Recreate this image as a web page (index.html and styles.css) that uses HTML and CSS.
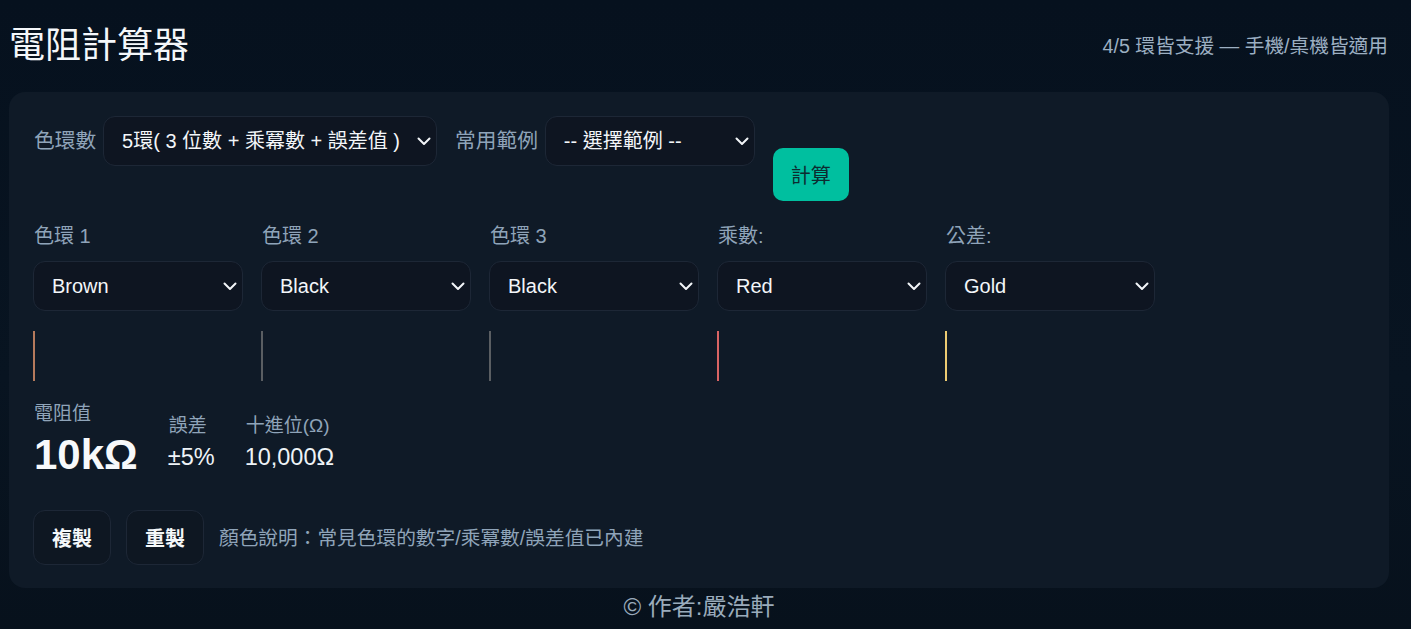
FILE: index.html
```html
<!DOCTYPE html>
<html lang="zh-Hant">
<head>
<meta charset="utf-8">
<title>電阻計算器</title>
<link rel="stylesheet" href="styles.css">
</head>
<body>
<div class="page">
  <header class="top">
    <h1 class="title">電阻計算器</h1>
    <div class="sub">4/5 環皆支援 — 手機/桌機皆適用</div>
  </header>

  <main class="card">
    <div class="row-top">
      <div class="field-inline">
        <label class="lbl">色環數</label>
        <div class="sel sel-count">
          <select><option>5環( 3 位數 + 乘冪數 + 誤差值 )</option><option>4環( 2 位數 + 乘冪數 + 誤差值 )</option></select>
          <svg class="chev" viewBox="0 0 14 9" width="14" height="9"><polyline points="1.5,1.5 7,7 12.5,1.5" fill="none" stroke="#f2f5f8" stroke-width="2" stroke-linecap="round" stroke-linejoin="round"/></svg>
        </div>
      </div>
      <div class="field-inline">
        <label class="lbl">常用範例</label>
        <div class="sel sel-example">
          <select><option>-- 選擇範例 --</option></select>
          <svg class="chev" viewBox="0 0 14 9" width="14" height="9"><polyline points="1.5,1.5 7,7 12.5,1.5" fill="none" stroke="#f2f5f8" stroke-width="2" stroke-linecap="round" stroke-linejoin="round"/></svg>
        </div>
      </div>
      <button class="calc">計算</button>
    </div>

    <div class="bands">
      <div class="band">
        <div class="band-label">色環 1</div>
        <div class="sel">
          <select><option>Brown</option></select>
          <svg class="chev" viewBox="0 0 14 9" width="14" height="9"><polyline points="1.5,1.5 7,7 12.5,1.5" fill="none" stroke="#f2f5f8" stroke-width="2" stroke-linecap="round" stroke-linejoin="round"/></svg>
        </div>
        <div class="swatch sw-brown"></div>
      </div>
      <div class="band">
        <div class="band-label">色環 2</div>
        <div class="sel">
          <select><option>Black</option></select>
          <svg class="chev" viewBox="0 0 14 9" width="14" height="9"><polyline points="1.5,1.5 7,7 12.5,1.5" fill="none" stroke="#f2f5f8" stroke-width="2" stroke-linecap="round" stroke-linejoin="round"/></svg>
        </div>
        <div class="swatch sw-black"></div>
      </div>
      <div class="band">
        <div class="band-label">色環 3</div>
        <div class="sel">
          <select><option>Black</option></select>
          <svg class="chev" viewBox="0 0 14 9" width="14" height="9"><polyline points="1.5,1.5 7,7 12.5,1.5" fill="none" stroke="#f2f5f8" stroke-width="2" stroke-linecap="round" stroke-linejoin="round"/></svg>
        </div>
        <div class="swatch sw-black"></div>
      </div>
      <div class="band">
        <div class="band-label">乘數:</div>
        <div class="sel">
          <select><option>Red</option></select>
          <svg class="chev" viewBox="0 0 14 9" width="14" height="9"><polyline points="1.5,1.5 7,7 12.5,1.5" fill="none" stroke="#f2f5f8" stroke-width="2" stroke-linecap="round" stroke-linejoin="round"/></svg>
        </div>
        <div class="swatch sw-red"></div>
      </div>
      <div class="band">
        <div class="band-label">公差:</div>
        <div class="sel">
          <select><option>Gold</option></select>
          <svg class="chev" viewBox="0 0 14 9" width="14" height="9"><polyline points="1.5,1.5 7,7 12.5,1.5" fill="none" stroke="#f2f5f8" stroke-width="2" stroke-linecap="round" stroke-linejoin="round"/></svg>
        </div>
        <div class="swatch sw-gold"></div>
      </div>
    </div>

    <div class="result">
      <div class="res-main">
        <div class="res-label">電阻值</div>
        <div class="res-big">10kΩ</div>
      </div>
      <div class="res-col">
        <div class="res-label">誤差</div>
        <div class="res-val">±5%</div>
      </div>
      <div class="res-col">
        <div class="res-label">十進位(Ω)</div>
        <div class="res-val">10,000Ω</div>
      </div>
    </div>

    <div class="actions">
      <button class="btn">複製</button>
      <button class="btn">重製</button>
      <span class="note">顏色說明：常見色環的數字/乘冪數/誤差值已內建</span>
    </div>
  </main>

  <footer class="foot">© 作者:嚴浩軒</footer>
</div>
</body>
</html>
```

FILE: styles.css
```css
* { box-sizing: border-box; }

html, body {
  margin: 0;
  padding: 0;
}

body {
  background: linear-gradient(180deg, #06111e 0%, #081421 60%, #07111c 100%);
  min-height: 629px;
  color: #e8eef5;
  font-family: "Liberation Sans", "Noto Sans CJK TC", sans-serif;
}

.page {
  width: 1380px;
  margin-left: 9px;
}

.top {
  height: 92px;
  display: flex;
  align-items: center;
  justify-content: space-between;
}

.title {
  margin: 0;
  font-size: 36px;
  font-weight: 400;
  line-height: 44px;
  color: #f4f7fa;
}

.sub {
  font-size: 19.7px;
  line-height: 24px;
  color: #9cafc2;
  padding-right: 1px;
}

.card {
  background: #0f1a27;
  border-radius: 16px;
  padding: 24px 24px 23px 24px;
}

.row-top {
  display: flex;
  align-items: flex-start;
  gap: 17px;
}

.field-inline {
  display: flex;
  align-items: center;
  gap: 7px;
  height: 50px;
}

.lbl {
  font-size: 20.7px;
  line-height: 26px;
  color: #8fa4b9;
  padding-left: 1px;
}

.sel {
  position: relative;
  width: 210px;
  height: 50px;
}

.sel-count { width: 334px; }
.sel-example { width: 210px; }

.sel select {
  appearance: none;
  -webkit-appearance: none;
  width: 100%;
  height: 100%;
  margin: 0;
  background: #0e1521;
  border: 1px solid #1d2736;
  border-radius: 12px;
  color: #f3f6f9;
  font-family: "Liberation Sans", "Noto Sans CJK TC", sans-serif;
  font-size: 20px;
  padding: 0 30px 0 18px;
  outline: none;
}

.chev {
  position: absolute;
  right: 6px;
  top: 21px;
  pointer-events: none;
}

.calc {
  margin-top: 32px;
  margin-left: 1px;
  width: 76px;
  height: 53px;
  border: none;
  border-radius: 10px;
  background: #00bf9f;
  color: #0d2b30;
  font-family: "Liberation Sans", "Noto Sans CJK TC", sans-serif;
  font-size: 20px;
  padding: 0;
}

.bands {
  display: flex;
  gap: 18px;
  margin-top: 22px;
}

.band {
  width: 210px;
  display: flex;
  flex-direction: column;
}

.band-label {
  font-size: 20px;
  line-height: 26px;
  color: #8fa4b9;
  padding-left: 1px;
  margin-bottom: 12px;
}

.swatch {
  width: 2px;
  height: 50px;
  margin-top: 20px;
}

.sw-brown { background: #b57a5c; }
.sw-black { background: #5a5e62; }
.sw-red { background: #d96464; }
.sw-gold { background: #eccb72; }

.result {
  display: flex;
  align-items: flex-start;
  gap: 30px;
  margin-top: 20px;
}

.res-label {
  font-size: 19px;
  line-height: 26px;
  color: #8fa4b9;
  padding-left: 1px;
}

.res-big {
  font-size: 42px;
  font-weight: 700;
  line-height: 48px;
  margin-top: 4px;
  color: #f7f9fb;
  padding-left: 1px;
}

.res-col {
  margin-top: 12px;
}

.res-val {
  font-size: 23.5px;
  line-height: 26px;
  margin-top: 5px;
  color: #eef3f7;
}

.actions {
  display: flex;
  align-items: center;
  gap: 15px;
  margin-top: 31px;
}

.btn {
  width: 78px;
  height: 55px;
  border: 1px solid #1d2736;
  border-radius: 12px;
  background: #0e1722;
  color: #f5f8fa;
  font-family: "Liberation Sans", "Noto Sans CJK TC", sans-serif;
  font-size: 20px;
  font-weight: 700;
  padding: 0;
}

.note {
  font-size: 19.7px;
  line-height: 26px;
  color: #8fa4b9;
}

.foot {
  text-align: center;
  font-size: 24px;
  line-height: 26px;
  padding-top: 6px;
  color: #9aabbb;
}
```
